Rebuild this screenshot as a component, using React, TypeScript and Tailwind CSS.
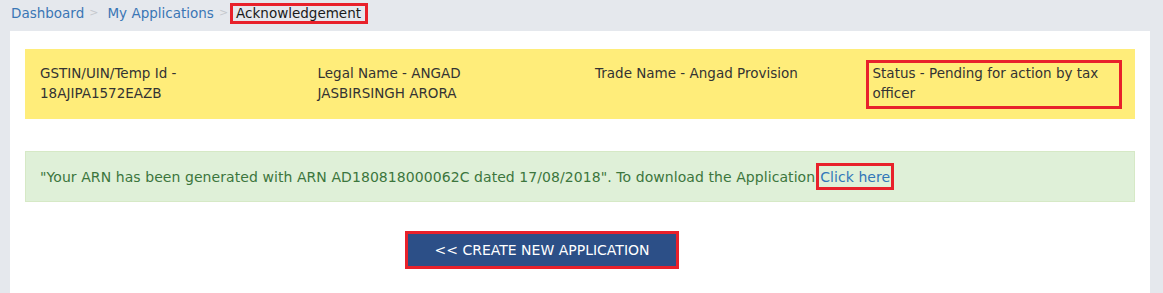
export default function App() {
  const font = { fontFamily: '"DejaVu Sans", Verdana, sans-serif' };
  return (
    <div className="w-[1163px] h-[293px] overflow-hidden bg-[#e5e8ed] text-[13.5px] leading-[20px] text-[#333]" style={font}>
      <div className="h-[31px] pl-[11px] pt-[1px] flex items-start">
        <div className="flex items-center h-[24px]">
          <span className="text-[#3a76b5]">Dashboard</span>
          <span className="text-[#c5c9ce] ml-[5px] mr-[9px] text-[11px]">&gt;</span>
          <span className="text-[#3a76b5]">My Applications</span>
          <span className="text-[#c5c9ce] ml-[5px] mr-[2px] text-[11px]">&gt;</span>
          <span className="border-[3px] border-[#e8212b] pl-[3px] pr-[4px] h-[21px] flex items-center text-[#1a1a1a]">Acknowledgement</span>
        </div>
      </div>
      <div className="ml-[10px] w-[1140px] h-[262px] bg-white px-[15px] pt-[18px]">
        <div className="bg-[#ffed7a] h-[70px] flex text-[#333] pt-[14px]">
          <div className="w-[277.5px] px-[15px]">GSTIN/UIN/Temp Id - 18AJIPA1572EAZB</div>
          <div className="w-[277.5px] px-[15px]">Legal Name - ANGAD<br />JASBIRSINGH ARORA</div>
          <div className="w-[277.5px] px-[15px]">Trade Name - Angad Provision</div>
          <div className="w-[277.5px] px-[15px]">
            <div className="-ml-[7px] -mt-[3px] w-[256px] border-[3px] border-[#e8212b] pl-[4px] pb-[3px]">
              Status - Pending for action by tax officer
            </div>
          </div>
        </div>
        <div className="mt-[32px] h-[51px] bg-[#dff0d8] border border-[#d6e9c6] text-[#3c763d] px-[14px] flex items-center text-[14px] tracking-[0.07px]">
          <span>"Your ARN has been generated with ARN AD180818000062C dated 17/08/2018". To download the Application</span>
          <span className="inline-flex items-center border-[3px] border-[#e8212b] h-[27px] px-[1px] ml-[1px] text-[#3277b8]">Click here</span>
        </div>
        <div className="mt-[29px] pl-[380px]">
          <div className="inline-flex border-[3px] border-[#e8212b] p-[0px]">
            <div className="w-[268px] h-[32px] bg-[#2c4f87] text-white flex items-center justify-center text-[14px] uppercase">
              &lt;&lt; Create New Application
            </div>
          </div>
        </div>
      </div>
    </div>
  );
}
